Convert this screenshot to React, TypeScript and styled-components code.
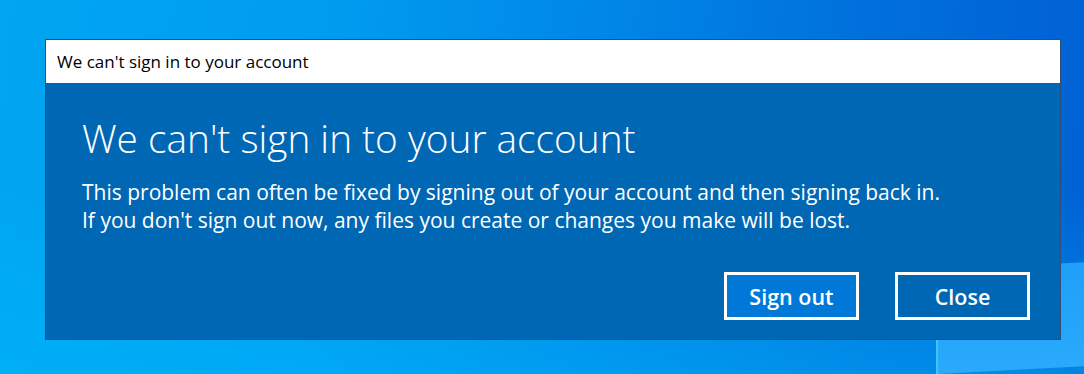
import styled, { createGlobalStyle } from "styled-components";

const GlobalStyle = createGlobalStyle`
  html, body {
    margin: 0;
    padding: 0;
    height: 100%;
    overflow: hidden;
  }
  body {
    font-family: "Open Sans", "Noto Sans", sans-serif;
    background: linear-gradient(95deg, #00a6f2 0%, #009cf0 30%, #0086e7 55%, #0070dc 78%, #0060d4 100%);
  }
`;

const Desktop = styled.div`
  position: relative;
  width: 1084px;
  height: 374px;
  overflow: hidden;
  padding: 39px 0 0 45px;
  box-sizing: border-box;
  background: linear-gradient(180deg, rgba(0, 200, 255, 0) 50%, rgba(0, 190, 255, 0.4) 100%);
`;

// light window pane of the wallpaper logo, lies behind the dialog
const Pane = styled.div`
  position: absolute;
  left: 936px;
  top: 270px;
  width: 148px;
  height: 104px;
  background: linear-gradient(180deg, #1f9ff7 0%, #2aaafb 100%);
  border-left: 2px solid #3fc3ff;
  transform: skewY(-3deg);
  transform-origin: left top;
`;

const Dialog = styled.div`
  position: relative;
  width: 1016px;
  border: 1px solid #2a4f7a;
  box-sizing: border-box;
  background: #0067b4;
`;

const TitleBar = styled.div`
  height: 43px;
  background: #ffffff;
  display: flex;
  align-items: center;
  padding-left: 11px;
  font-size: 17px;
  color: #000000;
`;

const Content = styled.div`
  padding: 31px 30px 19px 36px;
  color: #ffffff;
`;

const Heading = styled.h1`
  margin: 0;
  font-weight: 300;
  font-size: 38.8px;
  line-height: 48px;
`;

const Message = styled.p`
  margin: 16px 0 0;
  font-size: 21px;
  line-height: 28px;
`;

const Actions = styled.div`
  display: flex;
  justify-content: flex-end;
  gap: 36px;
  margin-top: 38px;
`;

const Button = styled.button<{ $primary?: boolean }>`
  width: 135px;
  height: 48px;
  box-sizing: border-box;
  border: 3px solid #ffffff;
  background: ${(p) => (p.$primary ? "#0078d7" : "transparent")};
  color: #ffffff;
  font-family: "Open Sans", "Noto Sans", sans-serif;
  font-weight: 600;
  font-size: 21.5px;
  padding: 0;
  cursor: pointer;
`;

export default function App() {
  return (
    <>
      <GlobalStyle />
      <Desktop>
        <Pane />
        <Dialog>
          <TitleBar>We can't sign in to your account</TitleBar>
          <Content>
            <Heading>We can't sign in to your account</Heading>
            <Message>
              This problem can often be fixed by signing out of your account and then signing back in.
              <br />
              If you don't sign out now, any files you create or changes you make will be lost.
            </Message>
            <Actions>
              <Button $primary>Sign out</Button>
              <Button>Close</Button>
            </Actions>
          </Content>
        </Dialog>
      </Desktop>
    </>
  );
}
